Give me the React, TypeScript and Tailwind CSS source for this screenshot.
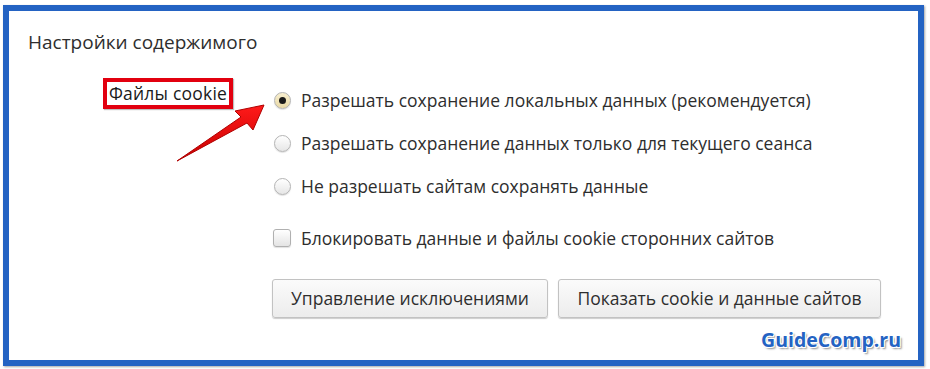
import React from 'react';

const font = { fontFamily: '"Open Sans", "Noto Sans", sans-serif' };

const Radio: React.FC<{ checked?: boolean }> = ({ checked }) => (
  <span
    className={`flex h-[17px] w-[17px] shrink-0 items-center justify-center rounded-full border border-[#b4b4b4] shadow-[0_1px_1px_rgba(0,0,0,0.12)] ${
      checked ? 'bg-gradient-to-b from-[#f8efcf] to-[#e9d9a6]' : 'bg-gradient-to-b from-[#ffffff] to-[#e6e6e6]'
    }`}
  >
    {checked && <span className="h-[7px] w-[7px] rounded-full bg-[#1a1a1a]" />}
  </span>
);

const options = [
  { label: 'Разрешать сохранение локальных данных (рекомендуется)', checked: true },
  { label: 'Разрешать сохранение данных только для текущего сеанса' },
  { label: 'Не разрешать сайтам сохранять данные' },
];

const App: React.FC = () => {
  return (
    <div className="relative h-[369px] w-[930px] overflow-hidden bg-white pl-[3px] pt-[5px]" style={font}>
      <div className="relative h-[361px] w-[921px] border-[6px] border-[#2463c3] shadow-[1px_1px_2px_rgba(0,0,0,0.35)]">
        <div className="ml-[19px] mt-[21px] text-[19px] leading-[20px] text-[#2e2e2e]">Настройки содержимого</div>

        <div className="mt-[26px] flex">
          <div className="ml-[94px] flex h-[31px] w-[130px] items-center justify-center border-[4px] border-[#e2000f] text-[17.5px] tracking-[0.2px] text-[#1a1a1a] shadow-[1px_1px_1px_rgba(0,0,0,0.25)]">
            Файлы cookie
          </div>

          <div className="ml-[39px] flex flex-col pt-[1px]">
            {options.map((o) => (
              <div key={o.label} className="flex h-[43px] items-center gap-[10px] pl-[2px] text-[17.5px] text-[#2e2e2e]">
                <Radio checked={o.checked} />
                <span>{o.label}</span>
              </div>
            ))}

            <div className="mt-[19px] flex h-[22px] items-center gap-[10px] pl-[1px] text-[17.5px] text-[#2e2e2e]">
              <span className="h-[18px] w-[18px] shrink-0 rounded-[3px] border border-[#b0b0b0] bg-gradient-to-b from-[#ffffff] to-[#e4e4e4] shadow-[0_1px_1px_rgba(0,0,0,0.12)]" />
              <span>Блокировать данные и файлы cookie сторонних сайтов</span>
            </div>

            <div className="mt-[30px] flex gap-[10px]">
              <button className="h-[39px] w-[276px] rounded-[3px] border border-[#c2c2c2] bg-gradient-to-b from-[#fbfbfb] to-[#ececec] text-[17.5px] text-[#2e2e2e] shadow-[0_1px_1px_rgba(0,0,0,0.2)]">
                Управление исключениями
              </button>
              <button className="h-[39px] w-[323px] rounded-[3px] border border-[#c2c2c2] bg-gradient-to-b from-[#fbfbfb] to-[#ececec] text-[17.5px] text-[#2e2e2e] shadow-[0_1px_1px_rgba(0,0,0,0.2)]">
                Показать cookie и данные сайтов
              </button>
            </div>
          </div>
        </div>

        <div
          className="absolute bottom-[8px] right-[17px] text-[19.5px] font-bold leading-[24px] text-[#2463c3]"
          style={{
            fontFamily: '"Open Sans", "Noto Sans", sans-serif',
            textShadow:
              '-1px -1px 0 #fff, 1px -1px 0 #fff, -1px 1px 0 #fff, 1px 1px 0 #fff, 2px 2px 2px rgba(0,0,0,0.45)',
          }}
        >
          GuideComp.ru
        </div>
      </div>

      <svg className="pointer-events-none absolute left-0 top-0" width="930" height="369" viewBox="0 0 930 369">
        <defs>
          <linearGradient id="ar" x1="0" y1="0" x2="0" y2="1">
            <stop offset="0" stopColor="#ff1a1a" />
            <stop offset="1" stopColor="#c80000" />
          </linearGradient>
        </defs>
        <polygon
          points="264,105 235,111 241,117 177,161 247,123 253,130"
          fill="url(#ar)"
          stroke="#b00000"
          strokeWidth="1"
          strokeLinejoin="round"
        />
      </svg>
    </div>
  );
};

export default App;
